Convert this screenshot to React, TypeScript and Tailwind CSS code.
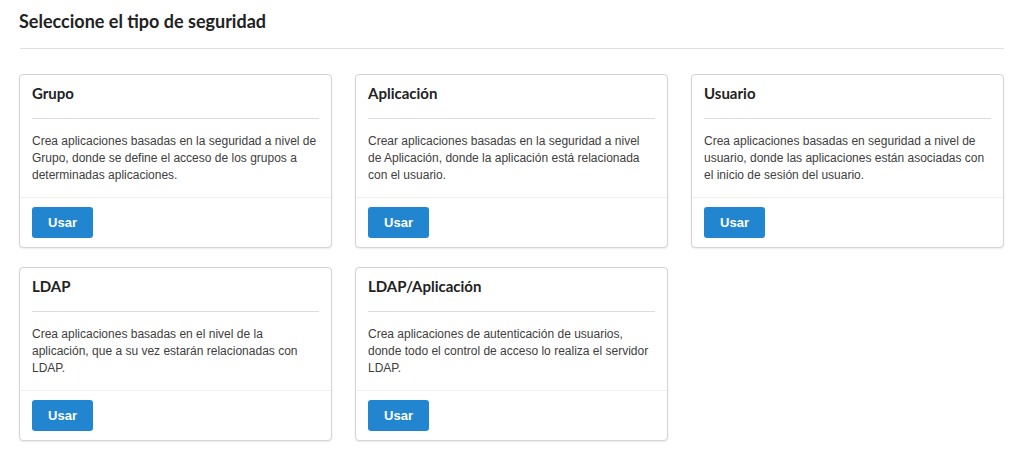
import React from "react";

interface SecurityType {
  title: string;
  description: string;
}

const types: SecurityType[] = [
  {
    title: "Grupo",
    description:
      "Crea aplicaciones basadas en la seguridad a nivel de Grupo, donde se define el acceso de los grupos a determinadas aplicaciones.",
  },
  {
    title: "Aplicación",
    description:
      "Crear aplicaciones basadas en la seguridad a nivel de Aplicación, donde la aplicación está relacionada con el usuario.",
  },
  {
    title: "Usuario",
    description:
      "Crea aplicaciones basadas en seguridad a nivel de usuario, donde las aplicaciones están asociadas con el inicio de sesión del usuario.",
  },
  {
    title: "LDAP",
    description:
      "Crea aplicaciones basadas en el nivel de la aplicación, que a su vez estarán relacionadas con LDAP.",
  },
  {
    title: "LDAP/Aplicación",
    description:
      "Crea aplicaciones de autenticación de usuarios, donde todo el control de acceso lo realiza el servidor LDAP.",
  },
];

function SecurityCard({ title, description }: SecurityType) {
  return (
    <div className="flex flex-col rounded-[4px] border border-[#d4d4d5] bg-white shadow-[0_1px_2px_rgba(0,0,0,0.08)]">
      <div className="px-3 pt-[8px]">
        <h3 className="font-['Lato',sans-serif] text-[15px] font-bold leading-[20px] text-[#222]">
          {title}
        </h3>
        <div className="mt-[15px] border-t border-[#dcdcdc]" />
        <p className="mt-[14px] pb-[13px] font-['Liberation_Sans',Arial,sans-serif] text-[12px] leading-[17px] text-[#404040]">
          {description}
        </p>
      </div>
      <div className="border-t border-[#efefef] px-3 pt-[9px] pb-[9px]">
        <button className="h-[31px] w-[61px] rounded-[3px] bg-[#2185d0] font-['Liberation_Sans',Arial,sans-serif] text-[13px] font-bold text-white">
          Usar
        </button>
      </div>
    </div>
  );
}

export default function App() {
  return (
    <div className="min-h-screen bg-white pl-[19px] pr-[12px] pt-[9px]">
      <h1 className="font-['Lato',sans-serif] text-[18px] font-bold leading-[24px] text-[#222]">
        Seleccione el tipo de seguridad
      </h1>
      <div className="mt-[15px] ml-px border-t border-[#dedede]" />
      <div className="mt-[25px] grid grid-cols-3 gap-x-[23px] gap-y-[19px]">
        {types.map((t) => (
          <SecurityCard key={t.title} {...t} />
        ))}
      </div>
    </div>
  );
}
